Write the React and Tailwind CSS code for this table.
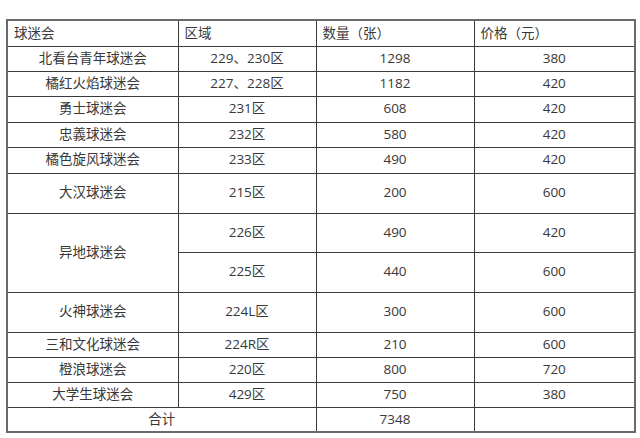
import React from "react";

const rows = [
  { name: "北看台青年球迷会", area: "229、230区", qty: "1298", price: "380", h: "h-[25px]" },
  { name: "橘红火焰球迷会", area: "227、228区", qty: "1182", price: "420", h: "h-[25px]" },
  { name: "勇士球迷会", area: "231区", qty: "608", price: "420", h: "h-[26px]" },
  { name: "忠義球迷会", area: "232区", qty: "580", price: "420", h: "h-[25px]" },
  { name: "橘色旋风球迷会", area: "233区", qty: "490", price: "420", h: "h-[26px]" },
  { name: "大汉球迷会", area: "215区", qty: "200", price: "600", h: "h-[40px]" },
];

const rows2 = [
  { name: "火神球迷会", area: "224L区", qty: "300", price: "600", h: "h-[40px]" },
  { name: "三和文化球迷会", area: "224R区", qty: "210", price: "600", h: "h-[25px]" },
  { name: "橙浪球迷会", area: "220区", qty: "800", price: "720", h: "h-[25px]" },
  { name: "大学生球迷会", area: "429区", qty: "750", price: "380", h: "h-[25px]" },
];

const td = "border border-[#3a3a3a] text-center p-0 align-middle";
const th = "border border-[#3a3a3a] text-left pl-[6px] align-middle";

function Row({ r }) {
  return (
    <tr className={r.h}>
      <td className={td}>{r.name}</td>
      <td className={td}>{r.area}</td>
      <td className={td}>{r.qty}</td>
      <td className={td}>{r.price}</td>
    </tr>
  );
}

export default function App() {
  return (
    <div
      className="w-[640px] h-[438px] bg-white pt-[19px] pl-[6px] text-[#383838] text-[13.5px] leading-none"
      style={{ fontFamily: '"Open Sans", "Noto Sans CJK SC", sans-serif' }}
    >
      <table className="table-fixed border-collapse border-2 border-[#6a6a6a] w-[628px]">
        <colgroup>
          <col className="w-[171px]" />
          <col className="w-[138px]" />
          <col className="w-[158px]" />
          <col className="w-[161px]" />
        </colgroup>
        <tbody>
          <tr className="h-[26px]">
            <td className={th}>球迷会</td>
            <td className={th}>区域</td>
            <td className={th}>数量（张）</td>
            <td className={th}>价格（元）</td>
          </tr>
          {rows.map((r) => (
            <Row key={r.name} r={r} />
          ))}
          <tr className="h-[39px]">
            <td className={td} rowSpan={2}>异地球迷会</td>
            <td className={td}>226区</td>
            <td className={td}>490</td>
            <td className={td}>420</td>
          </tr>
          <tr className="h-[40px]">
            <td className={td}>225区</td>
            <td className={td}>440</td>
            <td className={td}>600</td>
          </tr>
          {rows2.map((r) => (
            <Row key={r.name} r={r} />
          ))}
          <tr className="h-[25px]">
            <td className={td} colSpan={2}>合计</td>
            <td className={td}>7348</td>
            <td className={td}></td>
          </tr>
        </tbody>
      </table>
    </div>
  );
}
